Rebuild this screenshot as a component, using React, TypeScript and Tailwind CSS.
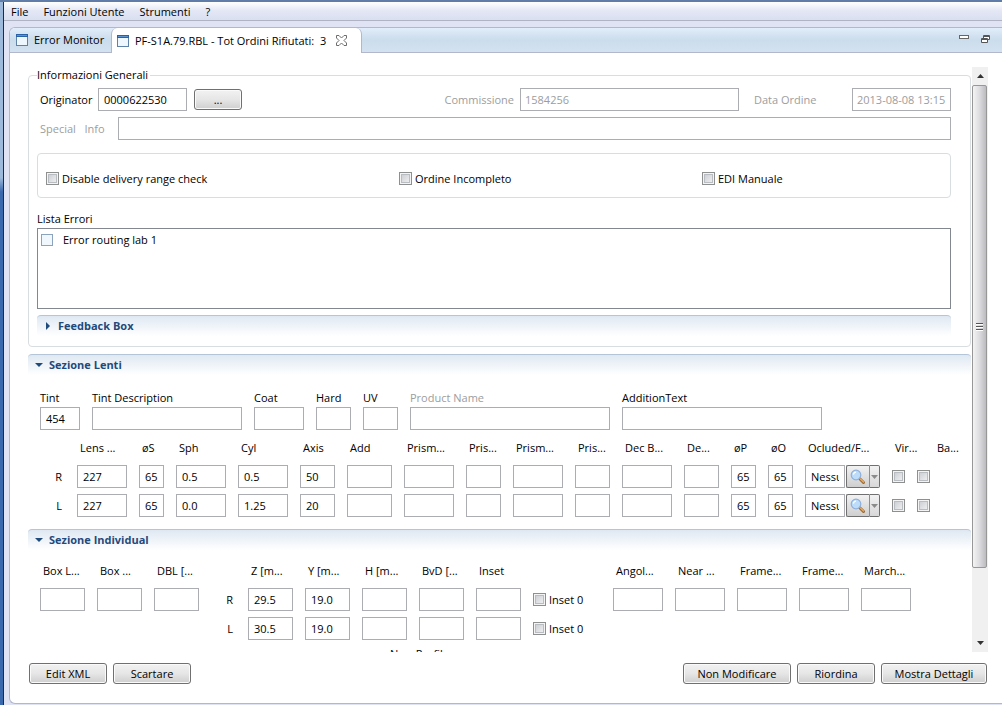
import { useState } from "react";

const inputBase =
  "h-[23px] min-w-0 border border-[#abadb3] bg-white px-[5px] text-black outline-none focus:border-[#5794bf] disabled:px-[4px] disabled:text-[#9d9d9d]";

const lensHeaders = [
  "Lens ...",
  "øS",
  "Sph",
  "Cyl",
  "Axis",
  "Add",
  "Prism...",
  "Pris...",
  "Prism...",
  "Pris...",
  "Dec B...",
  "De...",
  "øP",
  "øO",
  "Ocluded/F...",
  "Vir...",
  "Ba...",
];

const lensRows = [
  {
    eye: "R",
    values: ["227", "65", "0.5", "0.5", "50", "", "", "", "", "", "", "", "65", "65"],
  },
  {
    eye: "L",
    values: ["227", "65", "0.0", "1.25", "20", "", "", "", "", "", "", "", "65", "65"],
  },
];

const individualHeaders = ["Z [m...", "Y [m...", "H [m...", "BvD [...", "Inset"];

const individualRows = [
  { eye: "R", values: ["29.5", "19.0", "", "", ""] },
  { eye: "L", values: ["30.5", "19.0", "", "", ""] },
];

const WindowIcon = () => (
  <svg width="12" height="12" viewBox="0 0 12 12" className="shrink-0">
    <rect x="0.5" y="0.5" width="11" height="11" fill="#eef7fd" stroke="#5f83a8" />
    <rect x="0" y="0" width="12" height="3" fill="#2a62a8" />
    <rect x="1" y="1" width="10" height="1" fill="#5d95d4" />
  </svg>
);

const CloseIcon = () => (
  <svg width="11" height="11" viewBox="0 0 11 11">
    <path
      d="M0.5 0.5h2.5l2.5 2.5 2.5-2.5h2.5v2.5l-2.5 2.5 2.5 2.5v2.5h-2.5l-2.5-2.5-2.5 2.5h-2.5v-2.5l2.5-2.5-2.5-2.5z"
      fill="#fff"
      stroke="#6d6d6d"
    />
  </svg>
);

const MagnifierIcon = () => (
  <svg width="16" height="16" viewBox="0 0 16 16">
    <path d="M9.5 9.5l4 4" stroke="#9a6a35" strokeWidth="3" strokeLinecap="round" />
    <path d="M10.5 10l3 3" stroke="#e8ab62" strokeWidth="1.4" strokeLinecap="round" />
    <circle cx="6" cy="6" r="4.8" fill="#bcdcfa" stroke="#8fb0dc" strokeWidth="1.2" />
    <path d="M3.4 5.6a2.8 2.8 0 0 1 2.6-2.4" fill="none" stroke="#fff" strokeWidth="1.2" />
  </svg>
);

const CheckBox = ({ label, name }: { label?: string; name: string }) => {
  const [checked, setChecked] = useState(false);
  return (
    <label className="flex items-center gap-[3px] whitespace-nowrap">
      <input
        type="checkbox"
        name={name}
        aria-label={label ? undefined : name}
        checked={checked}
        onChange={(e) => setChecked(e.target.checked)}
        className="size-[13px] shrink-0 appearance-none border border-[#8e8f8f] bg-linear-to-br from-[#c4c8ce] to-[#f6f6f6] shadow-[inset_0_0_0_1px_#f4f4f4,inset_0_0_0_2px_#b9bcc0] checked:bg-[#3b6ea5] checked:bg-none"
      />
      {label}
    </label>
  );
};

const PushButton = ({ label, className }: { label: string; className: string }) => (
  <button
    type="button"
    className={`flex h-[21px] items-center justify-center rounded-[3px] border border-[#707070] bg-linear-to-b from-[#f2f2f2] via-[#e6e6e6] to-[#cfcfcf] whitespace-nowrap shadow-[inset_0_0_0_1px_#fafafa] ${className}`}
  >
    {label}
  </button>
);

const SectionBar = ({ title, open }: { title: string; open: boolean }) => (
  <button
    type="button"
    aria-expanded={open}
    className="flex h-[21px] w-full items-center gap-[6px] rounded-t-[4px] border-t border-[#b5c5d8] bg-linear-to-b from-[#dfe8f2] to-white px-[7px] text-left font-bold text-[#1f4a7c]"
  >
    <svg width="8" height="8" viewBox="0 0 8 8">
      <path d={open ? "M0 2h8l-4 4z" : "M2 0l4 4-4 4z"} fill="#1f4a7c" />
    </svg>
    {title}
  </button>
);

const Field = ({
  label,
  value = "",
  width,
  indent = false,
  disabled = false,
}: {
  label: string;
  value?: string;
  width: string;
  indent?: boolean;
  disabled?: boolean;
}) => (
  <label className={`flex flex-col ${width} ${indent ? "gap-[9px]" : "gap-[1px]"}`}>
    <span
      className={`h-4 whitespace-nowrap ${indent ? "pl-[3px]" : ""} ${
        disabled ? "text-[#9d9d9d]" : ""
      }`}
    >
      {label}
    </span>
    <input
      type="text"
      defaultValue={value}
      disabled={disabled}
      className={`w-full ${inputBase}`}
    />
  </label>
);

const OccludedPicker = ({ eye }: { eye: string }) => (
  <div className="flex h-[23px]">
    <input
      type="text"
      defaultValue="Nessuno"
      aria-label={`Ocluded ${eye}`}
      className={`w-10 ${inputBase}`}
    />
    <button
      type="button"
      aria-label={`Cerca ${eye}`}
      className="ml-px flex w-[24px] items-center justify-center rounded-l-[2px] border border-[#707070] border-r-[#8f8f8f] bg-linear-to-b from-[#f2f2f2] to-[#cfcfcf]"
    >
      <MagnifierIcon />
    </button>
    <button
      type="button"
      aria-label={`Apri elenco ${eye}`}
      className="flex w-[10px] items-center justify-center rounded-r-[2px] border border-l-0 border-[#707070] bg-linear-to-b from-[#f2f2f2] to-[#d8d8d8]"
    >
      <svg width="7" height="4" viewBox="0 0 7 4">
        <path d="M0 0h7l-3.500 4z" fill="#8b8b8b" />
      </svg>
    </button>
  </div>
);

const GeneralInfo = () => (
  <fieldset className="min-w-0 rounded-[4px] border border-[#d8dde0] px-2 pb-[10px]">
    <legend className="h-4 px-0">
      <span className="bg-white pr-[2px]">Informazioni Generali</span>
    </legend>

    <div className="mt-[5px] mr-[11px] flex items-center">
      <label htmlFor="originator" className="w-[61px] pl-[3px]">
        Originator
      </label>
      <input
        id="originator"
        type="text"
        defaultValue="0000622530"
        className={`w-[89px] ${inputBase}`}
      />
      <PushButton label="..." className="ml-[7px] w-12" />
      <label htmlFor="commissione" className="mr-[6px] ml-auto text-[#9d9d9d]">
        Commissione
      </label>
      <input
        id="commissione"
        type="text"
        disabled
        defaultValue="1584256"
        className={`w-[219px] ${inputBase}`}
      />
      <label htmlFor="dataOrdine" className="ml-[15px] w-[98px] text-[#9d9d9d]">
        Data Ordine
      </label>
      <input
        id="dataOrdine"
        type="text"
        disabled
        defaultValue="2013-08-08 13:15"
        className={`w-[99px] ${inputBase}`}
      />
    </div>

    <div className="mt-[6px] mr-[11px] flex items-center">
      <label
        htmlFor="specialInfo"
        className="w-[81px] pl-[3px] whitespace-pre text-[#9d9d9d]"
      >
        {"Special   Info"}
      </label>
      <input id="specialInfo" type="text" className={`flex-1 ${inputBase}`} />
    </div>

    <div className="mt-[13px] mr-[11px] grid h-[45px] grid-cols-[353fr_303fr_248fr] items-center rounded-[4px] border border-[#d8dde0] pt-[6px] pl-2">
      <CheckBox name="rangeCheck" label="Disable delivery range check" />
      <CheckBox name="incompleto" label="Ordine Incompleto" />
      <CheckBox name="ediManuale" label="EDI Manuale" />
    </div>

    <h2 className="mt-[13px] h-4">Lista Errori</h2>
    <ul className="mt-[1px] mr-[11px] h-[81px] border border-[#828790] p-[3px]">
      <li>
        <label className="flex h-4 items-center gap-[10px]">
          <input
            type="checkbox"
            className="size-3 appearance-none border border-[#8ba3bd] bg-[#f1f8fd] checked:bg-[#3b6ea5]"
          />
          Error routing lab 1
        </label>
      </li>
    </ul>

    <div className="mt-[6px] mr-[11px]">
      <SectionBar title="Feedback Box" open={false} />
    </div>
  </fieldset>
);

const LensSection = () => (
  <section className="mt-[7px]">
    <SectionBar title="Sezione Lenti" open />
    <div className="mt-[15px] flex gap-3 pl-3">
      <Field label="Tint" value="454" width="w-10" />
      <Field label="Tint Description" width="w-[150px]" />
      <Field label="Coat" width="w-[50px]" />
      <Field label="Hard" width="w-[35px]" />
      <Field label="UV" width="w-[35px]" />
      <Field label="Product Name" width="w-[200px]" disabled />
      <Field label="AdditionText" width="w-[200px]" />
    </div>

    <div className="mt-[10px] grid grid-cols-[25px_50px_25px_50px_50px_35px_45px_50px_35px_50px_35px_50px_35px_25px_25px_75px_30px_1fr] gap-x-3 gap-y-[6px] pl-3">
      <span />
      {lensHeaders.map((header, i) => (
        <span key={i} className="mb-[3px] h-4 pl-[3px] whitespace-nowrap">
          {header}
        </span>
      ))}
      {lensRows.map((row) => (
        <div key={row.eye} className="contents">
          <span className="self-center pr-[3px] text-right">{row.eye}</span>
          {row.values.map((value, i) => (
            <input
              key={i}
              type="text"
              defaultValue={value}
              aria-label={`${lensHeaders[i]} ${row.eye}`}
              className={inputBase}
            />
          ))}
          <OccludedPicker eye={row.eye} />
          <div className="col-span-2 flex items-center gap-3">
            <CheckBox name={`virtual${row.eye}`} />
            <CheckBox name={`base${row.eye}`} />
          </div>
        </div>
      ))}
    </div>
  </section>
);

const IndividualSection = () => (
  <section className="mt-3">
    <SectionBar title="Sezione Individual" open />
    <div className="mt-[13px] flex items-start gap-3 pl-3">
      <Field label="Box L..." width="w-[45px]" indent />
      <Field label="Box ..." width="w-[45px]" indent />
      <Field label="DBL [..." width="w-[45px]" indent />

      <div className="grid grid-cols-[25px_45px_45px_45px_45px_45px_68px] gap-x-3 gap-y-[6px]">
        <span />
        {individualHeaders.map((header) => (
          <span key={header} className="mb-[3px] h-4 pl-[3px] whitespace-nowrap">
            {header}
          </span>
        ))}
        <span />
        {individualRows.map((row) => (
          <div key={row.eye} className="contents">
            <span className="self-center pr-[3px] text-right">{row.eye}</span>
            {row.values.map((value, i) => (
              <input
                key={i}
                type="text"
                defaultValue={value}
                aria-label={`${individualHeaders[i]} ${row.eye}`}
                className={inputBase}
              />
            ))}
            <CheckBox name={`inset${row.eye}`} label="Inset 0" />
          </div>
        ))}
      </div>

      <Field label="Angol..." width="w-[50px]" indent />
      <Field label="Near ..." width="w-[50px]" indent />
      <Field label="Frame..." width="w-[50px]" indent />
      <Field label="Frame..." width="w-[50px]" indent />
      <Field label="March..." width="w-[50px]" indent />
    </div>
    <p className="mt-[6px] pl-[362px]">New Profile</p>
  </section>
);

const ScrollBar = () => (
  <div className="flex w-4 shrink-0 flex-col bg-[#f0f0f0]">
    <button type="button" aria-label="Su" className="flex h-[18px] items-center justify-center">
      <svg width="7" height="4" viewBox="0 0 7 4">
        <path d="M0 4h7l-3.500-4z" fill="#333" />
      </svg>
    </button>
    <div className="flex-1">
      <div className="flex h-[88%] w-[15px] flex-col items-center justify-center gap-[1px] rounded-[2px] border border-[#979797] bg-linear-to-r from-[#f4f4f4] via-[#dcdcdf] to-[#bcbcc0]">
        <span className="h-[2px] w-[7px] border-b border-white bg-[#555]" />
        <span className="h-[2px] w-[7px] border-b border-white bg-[#555]" />
        <span className="h-[2px] w-[7px] border-b border-white bg-[#555]" />
      </div>
    </div>
    <button type="button" aria-label="Giù" className="flex h-[18px] items-center justify-center">
      <svg width="7" height="4" viewBox="0 0 7 4">
        <path d="M0 0h7l-3.500 4z" fill="#333" />
      </svg>
    </button>
  </div>
);

const App = () => {
  return (
    <div className="flex h-screen border-t-2 border-[#5f7da8] bg-[#dfe3f4] font-['Open_Sans','Noto_Sans',sans-serif] text-[11px] leading-4 text-black">
      <div className="w-1 shrink-0 border-r border-[#1d2b4a] bg-linear-to-b from-[#9db9dc] from-25% to-[#3b69ad] to-27%" />

      <div className="flex min-w-0 flex-1 flex-col pb-px">
        <nav className="flex h-[19px] shrink-0 items-center gap-[15px] border-b border-[#b0b3c4] bg-linear-to-b from-white via-[#e3e7f5] to-[#dadff1] pt-[2px] pl-[7px]">
          <button type="button">File</button>
          <button type="button">Funzioni Utente</button>
          <button type="button">Strumenti</button>
          <button type="button">?</button>
        </nav>

        <main className="mt-[6px] ml-[5px] flex min-h-0 flex-1 flex-col rounded-tl-[6px] rounded-bl-[6px] border-y border-l border-[#b2b7cb] bg-white">
          <div className="flex h-[25px] shrink-0 rounded-tl-[5px] border-b border-[#b2b7cb] bg-linear-to-b from-[#e1edfa] via-[#cbdcec] to-[#d3e2f0]">
            <button type="button" className="flex w-[101px] items-center gap-[6px] pl-[6px] whitespace-nowrap">
              <WindowIcon />
              Error Monitor
            </button>
            <div className="-mb-px flex w-[251px] items-center gap-[6px] rounded-t-[6px] border-x border-[#b2b7cb] bg-white px-[5px] whitespace-pre">
              <WindowIcon />
              <span>{"PF-S1A.79.RBL - Tot Ordini Rifiutati:  3"}</span>
              <button type="button" aria-label="Chiudi" className="ml-1">
                <CloseIcon />
              </button>
            </div>
            <div className="ml-auto flex gap-3 pt-[7px] pr-3">
              <button type="button" aria-label="Riduci" className="self-start">
                <svg width="10" height="4" viewBox="0 0 10 4">
                  <rect x="0.5" y="0.5" width="9" height="3" fill="#fff" stroke="#666" />
                </svg>
              </button>
              <button type="button" aria-label="Ripristina" className="self-start">
                <svg width="9" height="9" viewBox="0 0 9 9">
                  <path d="M2.500 0.500h6v4h-6zM2.500 1.500h6" fill="#fff" stroke="#555" />
                  <path d="M0.500 3.500h6v4h-6zM0.500 4.500h6" fill="#fff" stroke="#555" />
                </svg>
              </button>
            </div>
          </div>

          <div className="mt-[14px] mr-[14px] ml-[18px] flex min-h-0 flex-1">
            <div className="min-w-0 flex-1 overflow-hidden pr-px">
              <GeneralInfo />
              <LensSection />
              <IndividualSection />
            </div>
            <ScrollBar />
          </div>

          <footer className="mt-[11px] mr-[15px] mb-[19px] ml-[19px] flex shrink-0 gap-[6px]">
            <PushButton label="Edit XML" className="w-[78px]" />
            <PushButton label="Scartare" className="w-[78px]" />
            <PushButton label="Non Modificare" className="ml-auto w-[108px]" />
            <PushButton label="Riordina" className="w-[78px]" />
            <PushButton label="Mostra Dettagli" className="w-[106px]" />
          </footer>
        </main>
      </div>
    </div>
  );
};

export default App;
